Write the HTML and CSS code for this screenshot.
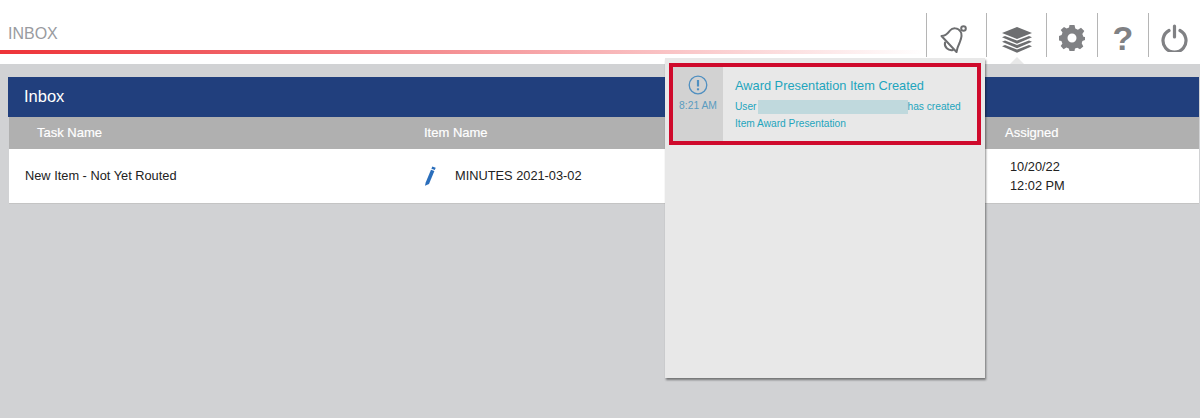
FILE: index.html
```html
<!DOCTYPE html>
<html lang="en">
<head>
    <meta charset="UTF-8">
    <title>Inbox</title>
    <link rel="stylesheet" href="styles.css">
</head>
<body>
    <header class="topbar">
        <div class="page-title">
            <span>INBOX</span>
            <div class="red-line"></div>
        </div>
        <nav class="tools">
            <a class="tool tool-wide">
                <svg class="bell" width="30" height="30" viewBox="0 0 30 30" fill="none" stroke="#6d6e70" stroke-width="2" stroke-linejoin="round" stroke-linecap="round">
                    <path d="M1.500 12 C6 12 8 9 10 6.500 C12.500 3.500 18 3.500 20.500 7.500 C23 11 21 15 19.500 19 C18 22 17 25 16.500 28 Z"/>
                    <path d="M5 18.500 C4 23 8 27 13 26"/>
                    <circle cx="23.500" cy="4.500" r="2.300"/>
                </svg>
            </a>
            <a class="tool tool-wide tool-active">
                <svg class="stack" width="30" height="26" viewBox="0 0 30 26" fill="#6d6e70">
                    <path d="M15 0 L30 6 L15 12 L0 6 Z"/>
                    <path d="M0 10.300 L3 9 L15 13.400 L27 9 L30 10.300 L15 16.800 Z"/>
                    <path d="M0 14.800 L3 13.500 L15 17.900 L27 13.500 L30 14.800 L15 21.300 Z"/>
                    <path d="M0 19.300 L3 18 L15 22.400 L27 18 L30 19.300 L15 25.800 Z"/>
                </svg>
            </a>
            <a class="tool">
                <svg width="26" height="26" viewBox="0 0 26 26" fill="#808184">
                    <path fill-rule="evenodd" d="M10.500 0 H15.500 L16.300 3.600 L18.900 4.700 L22 2.700 L25.300 6 L23.300 9.100 L24.400 11.700 L26 12 V15 L23.400 16 L22.700 18.300 L24.300 21.600 L21 24.300 L18.300 22.700 L16 23.600 L15.500 26 H10.500 L9.800 23.400 L7.400 22.500 L4.600 24.300 L1.700 21 L3.400 18.500 L2.400 16 L0 15.500 V11 L2.600 10 L3.500 7.600 L1.700 5 L5 1.900 L7.600 3.600 L10 2.600 Z M13 8.500 A4.500 4.500 0 1 0 13 17.500 A4.500 4.500 0 1 0 13 8.500 Z"/>
                </svg>
            </a>
            <a class="tool">
                <span class="help-mark">?</span>
            </a>
            <a class="tool tool-last">
                <svg width="27" height="28" viewBox="0 0 27 28" fill="none" stroke="#808184" stroke-width="3.200" stroke-linecap="round">
                    <path d="M8 6.500 A11.500 11.500 0 1 0 19 6.500"/>
                    <path d="M13.500 2 V13"/>
                </svg>
            </a>
        </nav>
    </header>

    <main class="content">
        <section class="panel">
            <h2 class="panel-title">Inbox</h2>
            <div class="grid-row grid-head">
                <div class="col-task">Task Name</div>
                <div class="col-item">Item Name</div>
                <div class="col-assigned">Assigned</div>
            </div>
            <div class="grid-row grid-body">
                <div class="col-task">New Item - Not Yet Routed</div>
                <div class="col-item">
                    <svg class="pencil" width="12" height="20" viewBox="0 0 12 20" fill="#2a6ebb">
                        <path d="M8.300 0.500 L11.700 1.800 L10.800 4 L7.400 2.700 Z"/>
                        <path d="M7 3.700 L10.400 5 L5 18 L1 19.700 L1.600 16.700 Z"/>
                    </svg>
                    <span>MINUTES 2021-03-02</span>
                </div>
                <div class="col-assigned">10/20/22<br>12:02 PM</div>
            </div>
        </section>
    </main>

    <div class="dropdown">
        <div class="caret"></div>
        <div class="note">
            <div class="note-time">
                <svg width="20" height="20" viewBox="0 0 20 20" fill="none" stroke="#4f8fc0" stroke-width="1.300">
                    <circle cx="10" cy="10" r="8.800"/>
                    <path d="M10 5 V11.500" stroke-width="2.200"/>
                    <path d="M10 13.300 V15.300" stroke-width="2.200"/>
                </svg>
                <span>8:21 AM</span>
            </div>
            <div class="note-body">
                <div class="note-title">Award Presentation Item Created</div>
                <div class="note-text">User<span class="redacted"></span>has created</div>
                <div class="note-text">Item Award Presentation</div>
            </div>
        </div>
    </div>
</body>
</html>
```

FILE: styles.css
```css
/* Base styles */
* {
    box-sizing: border-box;
    margin: 0;
    padding: 0;
}

body {
    font-family: 'Liberation Sans', Arial, sans-serif;
    background-color: #d1d2d4;
    color: #222;
    height: 418px;
    overflow: hidden;
    position: relative;
}

/* Top bar */
.topbar {
    background-color: #fff;
    height: 64px;
    display: flex;
    align-items: flex-start;
}

.page-title {
    flex: 1;
    padding-top: 24px;
    font-size: 16px;
    line-height: 19px;
    color: #999ba0;
}

.page-title span {
    display: block;
    padding-left: 8px;
}

.red-line {
    height: 4px;
    margin-top: 7px;
    background: linear-gradient(90deg, #ee3338, #f1696d 30%, #f8b4b6 65%, #ffffff 100%);
}

.tools {
    display: flex;
    padding-top: 13px;
}

.tool {
    width: 51px;
    height: 44px;
    border-left: 1px solid #b5b5b5;
    display: flex;
    align-items: center;
    justify-content: center;
    padding-top: 6px;
}

.tool-wide {
    width: 60px;
}

.tool-last {
    width: 52px;
}

.bell {
    margin: 2px 4px 0 0;
}

.stack {
    margin-top: 4px;
}

.help-mark {
    font-size: 34px;
    font-weight: bold;
    line-height: 34px;
    color: #808184;
}

/* Inbox panel */
.content {
    padding: 13px 1px 0 8px;
}

.panel-title {
    background-color: #213f7d;
    color: #fff;
    height: 40px;
    line-height: 39px;
    padding-left: 16px;
    font-size: 16.500px;
    font-weight: normal;
}

.grid-row {
    display: flex;
    margin-left: 1px;
    font-size: 12.800px;
}

.grid-head {
    background-color: #b0b0b0;
    color: #fff;
    height: 32px;
    align-items: center;
    padding-bottom: 2px;
    font-size: 13px;
    -webkit-text-stroke: 0.2px #fff;
}

.grid-head .col-task {
    padding-left: 28px;
    padding-bottom: 0;
}

.grid-body {
    background-color: #fff;
    height: 55px;
    align-items: center;
    border-bottom: 1px solid #c4c4c4;
}

.col-task {
    width: 406px;
    padding-left: 16px;
    padding-bottom: 2px;
}

.col-item {
    width: 590px;
    padding-left: 9px;
    display: flex;
    align-items: center;
}

.col-item span {
    padding-bottom: 2px;
}

.col-assigned {
    flex: 1;
}

.grid-body .col-assigned {
    padding-left: 5px;
    line-height: 19px;
}

.pencil {
    margin-right: 19px;
    flex-shrink: 0;
}

/* Notification dropdown */
.dropdown {
    position: absolute;
    left: 665px;
    top: 58px;
    width: 320px;
    height: 320px;
    background-color: #e8e8e8;
    box-shadow: 1px 2px 2px rgba(0, 0, 0, 0.45);
    padding: 5px 4px;
}

.caret {
    position: absolute;
    left: 345px;
    top: -1px;
    width: 14px;
    height: 7px;
    background-color: #e8e8e8;
    clip-path: polygon(50% 0, 100% 100%, 0 100%);
}

.note {
    border: 4px solid #cf0a2c;
    height: 82px;
    display: flex;
}

.note-time {
    width: 50px;
    background-color: #d2d2d2;
    color: #5a9cc0;
    font-size: 10.300px;
    display: flex;
    flex-direction: column;
    align-items: center;
    padding-top: 8px;
    gap: 5px;
}

.note-body {
    flex: 1;
    padding: 11px 0 0 12px;
    color: #1ea5bd;
    white-space: nowrap;
}

.note-title {
    font-size: 12.800px;
    line-height: 15px;
    margin-bottom: 5px;
}

.note-text {
    font-size: 10.200px;
    line-height: 17px;
    display: flex;
    align-items: center;
}

.redacted {
    display: inline-block;
    width: 150px;
    height: 14px;
    margin-left: 1px;
    background-color: #c0d9dd;
}
```
